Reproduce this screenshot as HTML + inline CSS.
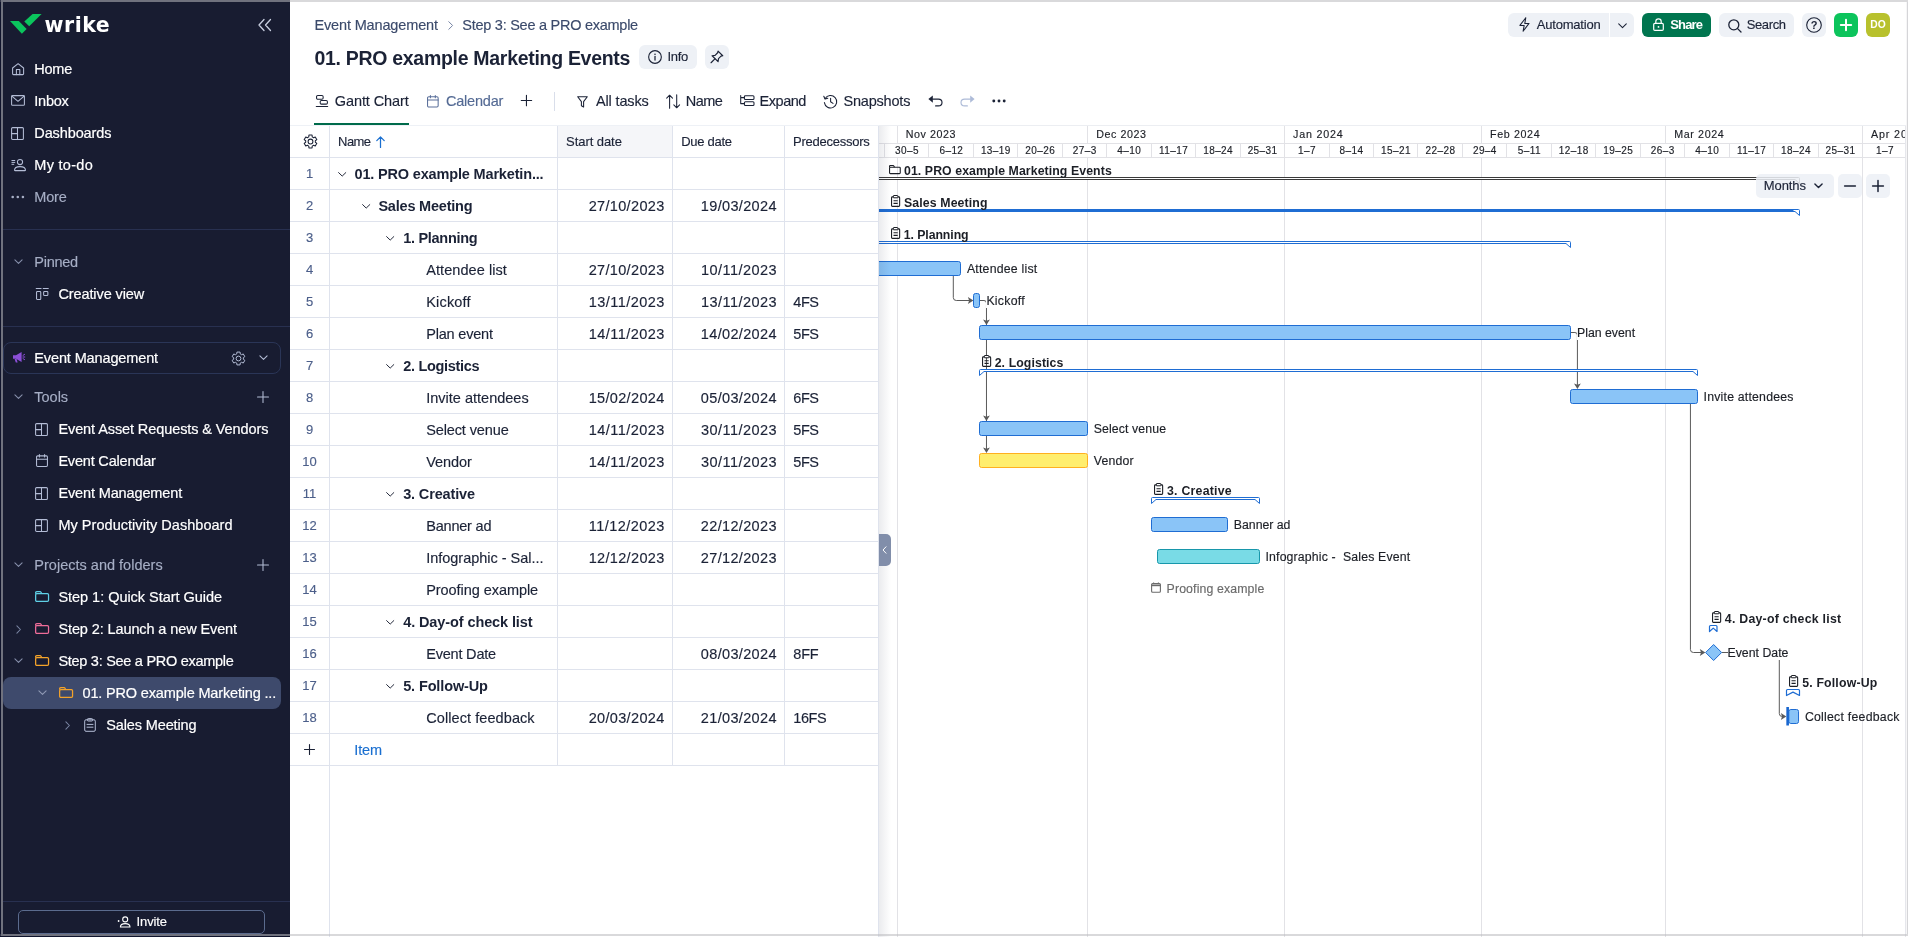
<!DOCTYPE html>
<html lang="en"><head><meta charset="utf-8"><title>Wrike Gantt</title><style>
html,body{margin:0;padding:0}
body{width:1908px;height:937px;overflow:hidden;position:relative;background:#fff;font-family:"Liberation Sans",sans-serif;}
.t{position:absolute;white-space:pre;line-height:20px;height:20px;-webkit-text-stroke:0.15px;}
svg{overflow:visible}
#app{position:absolute;left:0;top:0;width:1908px;height:937px;will-change:transform;}
</style></head>
<body>
<div id="app">
<div style="position:absolute;left:0px;top:0px;width:290px;height:937px;background:#181c31"></div>
<svg style="position:absolute;left:0px;top:0px;" width="50" height="40" viewBox="0 0 50 40" fill="none"><path d="M10 21 L18.8 21 L26.6 29.1 L21.9 33.8 Z" fill="#0bc55d"/><path d="M24.3 21.5 L32.6 14 L41.6 14 L29.2 26.2 Z" fill="#0bc55d"/></svg>
<span class="t" style="left:44.60px;top:14.50px;font-size:20.5px;color:#ffffff;font-weight:700;-webkit-text-stroke:0;letter-spacing:0.507px;font-family:'DejaVu Sans','Liberation Sans',sans-serif;">wrike</span>
<svg style="position:absolute;left:257px;top:18px;" width="16" height="14" viewBox="0 0 16 14" fill="none"><path d="M7 1.5 L2 7 L7 12.5 M13.5 1.5 L8.5 7 L13.5 12.5" stroke="#c9cfe0" stroke-width="1.3" stroke-linecap="round" stroke-linejoin="round"/></svg>
<svg style="position:absolute;left:12px;top:62.9px;" width="13" height="13" viewBox="0 0 13 13" fill="none"><path d="M0.6 5 L6.1 0.7 L11.6 5 V10.7 Q11.6 11.6 10.7 11.6 H1.5 Q0.6 11.6 0.6 10.7 Z" stroke="#b4bdd6" stroke-width="1.05" stroke-linecap="round" stroke-linejoin="round"/><path d="M4.4 11.6 V6.4 H7.8 V11.6" stroke="#b4bdd6" stroke-width="1.05" stroke-linecap="round" stroke-linejoin="round"/></svg>
<span class="t" style="left:34.30px;top:59.00px;font-size:14.5px;color:#ffffff;letter-spacing:-0.247px;-webkit-text-stroke:0.2px #fff;">Home</span>
<svg style="position:absolute;left:11px;top:95px;" width="14" height="11" viewBox="0 0 14 11" fill="none"><rect x="0.6" y="0.6" width="12.8" height="9.7" rx="0.9" stroke="#b4bdd6" stroke-width="1.05" stroke-linecap="round" stroke-linejoin="round"/><path d="M0.9 1.2 L7 6.3 L13.1 1.2" stroke="#b4bdd6" stroke-width="1.05" stroke-linecap="round" stroke-linejoin="round"/></svg>
<span class="t" style="left:34.30px;top:91.00px;font-size:14.5px;color:#ffffff;letter-spacing:-0.237px;-webkit-text-stroke:0.2px #fff;">Inbox</span>
<svg style="position:absolute;left:11px;top:127px;" width="13" height="13" viewBox="0 0 13 13" fill="none"><rect x="0.6" y="0.6" width="11.8" height="11.8" rx="1" stroke="#b4bdd6" stroke-width="1.05" stroke-linecap="round" stroke-linejoin="round"/><path d="M6.5 0.6 V12.4 M0.6 6.6 H6.5" stroke="#b4bdd6" stroke-width="1.05" stroke-linecap="round" stroke-linejoin="round"/></svg>
<span class="t" style="left:34.30px;top:123.00px;font-size:14.5px;color:#ffffff;letter-spacing:-0.109px;-webkit-text-stroke:0.2px #fff;">Dashboards</span>
<svg style="position:absolute;left:11px;top:158px;" width="15" height="13" viewBox="0 0 15 13" fill="none"><circle cx="9" cy="4" r="2.6" stroke="#b4bdd6" stroke-width="1.05" stroke-linecap="round" stroke-linejoin="round"/><path d="M3.5 12.3 Q3.5 8.6 9 8.6 Q14.5 8.6 14.5 12.3 Q14.5 12.6 14 12.6 H4 Q3.5 12.6 3.5 12.3 Z" stroke="#b4bdd6" stroke-width="1.05" stroke-linecap="round" stroke-linejoin="round"/><path d="M0.5 2.5 H4.2 M0.5 4.4 H4.2 M0.5 6.3 H3.2" stroke="#b4bdd6" stroke-width="1"/></svg>
<span class="t" style="left:34.30px;top:155.00px;font-size:14.5px;color:#ffffff;letter-spacing:0.285px;-webkit-text-stroke:0.2px #fff;">My to-do</span>
<svg style="position:absolute;left:11px;top:195px;" width="14" height="4" viewBox="0 0 14 4" fill="none"><circle cx="1.7" cy="2" r="1.3" fill="#a6aec5"/><circle cx="6.8" cy="2" r="1.3" fill="#a6aec5"/><circle cx="11.9" cy="2" r="1.3" fill="#a6aec5"/></svg>
<span class="t" style="left:34.30px;top:187.00px;font-size:14.5px;color:#a6aec5;letter-spacing:-0.187px;">More</span>
<div style="position:absolute;left:3px;top:229px;width:287px;height:1px;background:#283050"></div>
<svg style="position:absolute;left:14px;top:259px;" width="9" height="6" viewBox="0 0 9 6" fill="none"><path d="M0.9 0.9 L4.5 4.4 L8.1 0.9" stroke="#8790ac" stroke-width="1.05" stroke-linecap="round" stroke-linejoin="round"/></svg>
<span class="t" style="left:34.30px;top:252.00px;font-size:14.5px;color:#a6aec5;letter-spacing:-0.259px;">Pinned</span>
<svg style="position:absolute;left:35.8px;top:288px;" width="13" height="12" viewBox="0 0 13 12" fill="none"><path d="M0.2 0.5 H5.1 M7.2 0.5 H12.3" stroke="#b4bdd6" stroke-width="1.05" stroke-linecap="round" stroke-linejoin="round"/><rect x="0.55" y="3.45" width="4.2" height="8" rx="0.8" stroke="#b4bdd6" stroke-width="1.05" stroke-linecap="round" stroke-linejoin="round"/><rect x="7.65" y="3.45" width="4.2" height="4.1" rx="0.8" stroke="#b4bdd6" stroke-width="1.05" stroke-linecap="round" stroke-linejoin="round"/></svg>
<span class="t" style="left:58.40px;top:284.00px;font-size:14.5px;color:#ffffff;letter-spacing:-0.095px;-webkit-text-stroke:0.2px #fff;">Creative view</span>
<div style="position:absolute;left:3px;top:326px;width:287px;height:1px;background:#283050"></div>
<div style="position:absolute;left:3px;top:342px;width:276px;height:30px;border:1px solid #2a3557;border-radius:8px;"></div>
<svg style="position:absolute;left:12px;top:351px;" width="13" height="13" viewBox="0 0 13 13" fill="none"><path d="M1 4.2 H4 L9.6 1 V11 L4 7.8 H1 Z" fill="#8b4fd8"/><path d="M2.6 8 L3.8 11.6 H5.6 L4.6 8 Z" fill="#8b4fd8"/><path d="M11 4.4 L12.6 3.4 M11 6 H12.8 M11 7.6 L12.6 8.6" stroke="#8b4fd8" stroke-width="1" stroke-linecap="round"/></svg>
<span class="t" style="left:34.30px;top:348.00px;font-size:14.5px;color:#ffffff;letter-spacing:-0.128px;-webkit-text-stroke:0.2px #fff;">Event Management</span>
<svg style="position:absolute;left:231.4px;top:350.6px" width="15" height="15" viewBox="0 0 15 15" fill="none"><path d="M5.77 2.91 L5.93 1.09 L9.07 1.09 L9.23 2.91 L10.61 3.71 L12.27 2.94 L13.84 5.65 L12.33 6.70 L12.33 8.30 L13.84 9.35 L12.27 12.06 L10.61 11.29 L9.23 12.09 L9.07 13.91 L5.93 13.91 L5.77 12.09 L4.39 11.29 L2.73 12.06 L1.16 9.35 L2.67 8.30 L2.67 6.70 L1.16 5.65 L2.73 2.94 L4.39 3.71 Z" stroke="#b4bdd6" stroke-width="1.0" stroke-linejoin="round"/><circle cx="7.5" cy="7.5" r="2.4" stroke="#b4bdd6" stroke-width="1.0"/></svg>
<svg style="position:absolute;left:259px;top:355px;" width="9" height="6" viewBox="0 0 9 6" fill="none"><path d="M0.9 0.9 L4.5 4.4 L8.1 0.9" stroke="#b4bdd6" stroke-width="1.05" stroke-linecap="round" stroke-linejoin="round"/></svg>
<svg style="position:absolute;left:14px;top:394px;" width="9" height="6" viewBox="0 0 9 6" fill="none"><path d="M0.9 0.9 L4.5 4.4 L8.1 0.9" stroke="#8790ac" stroke-width="1.05" stroke-linecap="round" stroke-linejoin="round"/></svg>
<span class="t" style="left:34.30px;top:387.00px;font-size:14.5px;color:#a6aec5;letter-spacing:-0.012px;">Tools</span>
<svg style="position:absolute;left:257px;top:391px;" width="12" height="12" viewBox="0 0 12 12" fill="none"><path d="M6 0.5 V11.5 M0.5 6 H11.5" stroke="#b4bdd6" stroke-width="1.05" stroke-linecap="round"/></svg>
<svg style="position:absolute;left:35px;top:423px;" width="13" height="13" viewBox="0 0 13 13" fill="none"><rect x="0.6" y="0.6" width="11.8" height="11.8" rx="1" stroke="#b4bdd6" stroke-width="1.05" stroke-linecap="round" stroke-linejoin="round"/><path d="M6.5 0.6 V12.4 M0.6 6.6 H6.5" stroke="#b4bdd6" stroke-width="1.05" stroke-linecap="round" stroke-linejoin="round"/></svg>
<span class="t" style="left:58.40px;top:419.00px;font-size:14.5px;color:#ffffff;letter-spacing:-0.093px;-webkit-text-stroke:0.2px #fff;">Event Asset Requests &amp; Vendors</span>
<svg style="position:absolute;left:36px;top:453.9px;" width="12" height="13" viewBox="0 0 12 13" fill="none"><rect x="0.55" y="1.85" width="10.9" height="10.6" rx="1.1" stroke="#b4bdd6" stroke-width="1.05" stroke-linecap="round" stroke-linejoin="round"/><path d="M0.55 5.3 H11.45 M3.4 0.5 V2.9 M8.6 0.5 V2.9" stroke="#b4bdd6" stroke-width="1.05" stroke-linecap="round" stroke-linejoin="round"/></svg>
<span class="t" style="left:58.40px;top:451.00px;font-size:14.5px;color:#ffffff;letter-spacing:-0.190px;-webkit-text-stroke:0.2px #fff;">Event Calendar</span>
<svg style="position:absolute;left:35px;top:487px;" width="13" height="13" viewBox="0 0 13 13" fill="none"><rect x="0.6" y="0.6" width="11.8" height="11.8" rx="1" stroke="#b4bdd6" stroke-width="1.05" stroke-linecap="round" stroke-linejoin="round"/><path d="M6.5 0.6 V12.4 M0.6 6.6 H6.5" stroke="#b4bdd6" stroke-width="1.05" stroke-linecap="round" stroke-linejoin="round"/></svg>
<span class="t" style="left:58.40px;top:483.00px;font-size:14.5px;color:#ffffff;letter-spacing:-0.128px;-webkit-text-stroke:0.2px #fff;">Event Management</span>
<svg style="position:absolute;left:35px;top:519px;" width="13" height="13" viewBox="0 0 13 13" fill="none"><rect x="0.6" y="0.6" width="11.8" height="11.8" rx="1" stroke="#b4bdd6" stroke-width="1.05" stroke-linecap="round" stroke-linejoin="round"/><path d="M6.5 0.6 V12.4 M0.6 6.6 H6.5" stroke="#b4bdd6" stroke-width="1.05" stroke-linecap="round" stroke-linejoin="round"/></svg>
<span class="t" style="left:58.40px;top:515.00px;font-size:14.5px;color:#ffffff;letter-spacing:0.037px;-webkit-text-stroke:0.2px #fff;">My Productivity Dashboard</span>
<svg style="position:absolute;left:14px;top:562px;" width="9" height="6" viewBox="0 0 9 6" fill="none"><path d="M0.9 0.9 L4.5 4.4 L8.1 0.9" stroke="#8790ac" stroke-width="1.05" stroke-linecap="round" stroke-linejoin="round"/></svg>
<span class="t" style="left:34.30px;top:555.00px;font-size:14.5px;color:#a6aec5;letter-spacing:0.012px;">Projects and folders</span>
<svg style="position:absolute;left:257px;top:559px;" width="12" height="12" viewBox="0 0 12 12" fill="none"><path d="M6 0.5 V11.5 M0.5 6 H11.5" stroke="#b4bdd6" stroke-width="1.05" stroke-linecap="round"/></svg>
<svg style="position:absolute;left:34.8px;top:591px;" width="15" height="12" viewBox="0 0 15 12" fill="none"><path d="M0.65 2.7 V1.7 Q0.65 0.65 1.7 0.65 H5 Q5.7 0.65 6 1.2 L6.8 2.7" stroke="#5fd0e6" stroke-width="1.25" stroke-linejoin="round"/><rect x="0.65" y="2.7" width="12.9" height="7.7" rx="1.1" stroke="#5fd0e6" stroke-width="1.25"/></svg>
<span class="t" style="left:58.40px;top:587.00px;font-size:14.5px;color:#ffffff;letter-spacing:-0.029px;-webkit-text-stroke:0.2px #fff;">Step 1: Quick Start Guide</span>
<svg style="position:absolute;left:16px;top:624.5px;" width="6" height="9" viewBox="0 0 6 9" fill="none"><path d="M0.9 0.9 L4.4 4.5 L0.9 8.1" stroke="#7a85a3" stroke-width="1.05" stroke-linecap="round" stroke-linejoin="round"/></svg>
<svg style="position:absolute;left:34.8px;top:623px;" width="15" height="12" viewBox="0 0 15 12" fill="none"><path d="M0.65 2.7 V1.7 Q0.65 0.65 1.7 0.65 H5 Q5.7 0.65 6 1.2 L6.8 2.7" stroke="#ee6c99" stroke-width="1.25" stroke-linejoin="round"/><rect x="0.65" y="2.7" width="12.9" height="7.7" rx="1.1" stroke="#ee6c99" stroke-width="1.25"/></svg>
<span class="t" style="left:58.40px;top:619.00px;font-size:14.5px;color:#ffffff;letter-spacing:-0.107px;-webkit-text-stroke:0.2px #fff;">Step 2: Launch a new Event</span>
<svg style="position:absolute;left:14px;top:658px;" width="9" height="6" viewBox="0 0 9 6" fill="none"><path d="M0.9 0.9 L4.5 4.4 L8.1 0.9" stroke="#8790ac" stroke-width="1.05" stroke-linecap="round" stroke-linejoin="round"/></svg>
<svg style="position:absolute;left:34.8px;top:655px;" width="15" height="12" viewBox="0 0 15 12" fill="none"><path d="M0.65 2.7 V1.7 Q0.65 0.65 1.7 0.65 H5 Q5.7 0.65 6 1.2 L6.8 2.7" stroke="#f4a32a" stroke-width="1.25" stroke-linejoin="round"/><rect x="0.65" y="2.7" width="12.9" height="7.7" rx="1.1" stroke="#f4a32a" stroke-width="1.25"/></svg>
<span class="t" style="left:58.40px;top:651.00px;font-size:14.5px;color:#ffffff;letter-spacing:-0.278px;-webkit-text-stroke:0.2px #fff;">Step 3: See a PRO example</span>
<div style="position:absolute;left:3px;top:677px;width:278px;height:32px;background:#3e4a6c;border-radius:8px;"></div>
<svg style="position:absolute;left:38px;top:690px;" width="9" height="6" viewBox="0 0 9 6" fill="none"><path d="M0.9 0.9 L4.5 4.4 L8.1 0.9" stroke="#909ab5" stroke-width="1.05" stroke-linecap="round" stroke-linejoin="round"/></svg>
<svg style="position:absolute;left:58.5px;top:687px;" width="15" height="12" viewBox="0 0 15 12" fill="none"><path d="M0.65 2.7 V1.7 Q0.65 0.65 1.7 0.65 H5 Q5.7 0.65 6 1.2 L6.8 2.7" stroke="#f4a32a" stroke-width="1.25" stroke-linejoin="round"/><rect x="0.65" y="2.7" width="12.9" height="7.7" rx="1.1" stroke="#f4a32a" stroke-width="1.25"/></svg>
<span class="t" style="left:82.50px;top:683.00px;font-size:14.5px;color:#ffffff;letter-spacing:-0.160px;-webkit-text-stroke:0.2px #fff;">01. PRO example Marketing ...</span>
<svg style="position:absolute;left:64.5px;top:720.5px;" width="6" height="9" viewBox="0 0 6 9" fill="none"><path d="M0.9 0.9 L4.4 4.5 L0.9 8.1" stroke="#7a85a3" stroke-width="1.05" stroke-linecap="round" stroke-linejoin="round"/></svg>
<svg style="position:absolute;left:83.5px;top:718px" width="12" height="14" viewBox="0 0 12 14" fill="none"><rect x="0.7" y="1.8" width="10.6" height="11.5" rx="1.3" stroke="#b4bdd6" stroke-width="1.0"/><rect x="3.4" y="0.6" width="5.2" height="2.4" rx="0.8" stroke="#b4bdd6" stroke-width="1.0" fill="none"/><path d="M3 6.4 H9 M3 9.2 H9" stroke="#b4bdd6" stroke-width="1.0" stroke-linecap="round"/></svg>
<span class="t" style="left:106.20px;top:715.00px;font-size:14.5px;color:#ffffff;letter-spacing:-0.122px;-webkit-text-stroke:0.2px #fff;">Sales Meeting</span>
<div style="position:absolute;left:3px;top:901px;width:287px;height:1px;background:#283050"></div>
<div style="position:absolute;left:18px;top:910px;width:245px;height:22px;border:1px solid #5b6b8e;border-radius:5px;"></div>
<svg style="position:absolute;left:116.5px;top:915.5px;" width="14" height="12" viewBox="0 0 14 12" fill="none"><circle cx="8.2" cy="3.4" r="2.5" stroke="#ffffff" stroke-width="1.1"/><path d="M3.4 11 Q3.4 7.6 8.2 7.6 Q13 7.6 13 11 Z" stroke="#ffffff" stroke-width="1.1" stroke-linejoin="round"/><circle cx="1.6" cy="5" r="0.9" fill="#ffffff"/></svg>
<span class="t" style="left:136.60px;top:911.50px;font-size:13px;color:#ffffff;letter-spacing:-0.130px;">Invite</span>
<span class="t" style="left:314.40px;top:15.20px;font-size:14.5px;color:#3b4a6b;letter-spacing:-0.141px;">Event Management</span>
<svg style="position:absolute;left:448px;top:21px;" width="6" height="9" viewBox="0 0 6 9" fill="none"><path d="M0.8 0.7 L4.6 4.5 L0.8 8.3" stroke="#7583a3" stroke-width="1.0" stroke-linecap="round" stroke-linejoin="round"/></svg>
<span class="t" style="left:462.30px;top:15.20px;font-size:14.5px;color:#3b4a6b;letter-spacing:-0.262px;">Step 3: See a PRO example</span>
<span class="t" style="left:314.40px;top:48.00px;font-size:19.5px;color:#1b2236;font-weight:700;-webkit-text-stroke:0;letter-spacing:-0.295px;">01. PRO example Marketing Events</span>
<div style="position:absolute;left:639px;top:45px;width:58px;height:24px;background:#eef1f6;border-radius:6px;"></div>
<svg style="position:absolute;left:647.8px;top:49.9px;" width="14" height="14" viewBox="0 0 14 14" fill="none"><circle cx="7" cy="7" r="6.35" stroke="#1b2236" stroke-width="1.1" stroke-linecap="round" stroke-linejoin="round"/><path d="M7 6.4 V10" stroke="#1b2236" stroke-width="1.25" stroke-linecap="round" stroke-linejoin="round"/><circle cx="7" cy="4.2" r="0.8" fill="#1b2236"/></svg>
<span class="t" style="left:667.40px;top:47.00px;font-size:13px;color:#1b2236;letter-spacing:-0.272px;">Info</span>
<div style="position:absolute;left:705px;top:45px;width:24px;height:24px;background:#eef1f6;border-radius:6px;"></div>
<svg style="position:absolute;left:710.2px;top:49.6px;" width="13.8" height="13.8" viewBox="0 0 13 13" fill="none"><path d="M7.6 1 L12 5.4 L10.4 5.8 L8 8.2 L7.6 11 L2 5.4 L4.8 5 L7.2 2.6 Z" stroke="#1b2236" stroke-width="1.1" stroke-linecap="round" stroke-linejoin="round"/><path d="M4.6 8.4 L1 12" stroke="#1b2236" stroke-width="1.1" stroke-linecap="round" stroke-linejoin="round"/></svg>
<svg style="position:absolute;left:316px;top:95px;" width="12" height="12" viewBox="0 0 12 12" fill="none"><rect x="0.55" y="0.55" width="6.6" height="3.6" rx="1.2" stroke="#1b2236" stroke-width="1.05" stroke-linecap="round" stroke-linejoin="round"/><rect x="4.2" y="5.5" width="7.2" height="3.6" rx="1.2" stroke="#1b2236" stroke-width="1.05" stroke-linecap="round" stroke-linejoin="round"/><path d="M0.3 11.45 H11.7" stroke="#1b2236" stroke-width="1.05" stroke-linecap="round" stroke-linejoin="round"/></svg>
<span class="t" style="left:334.80px;top:91.00px;font-size:14.5px;color:#1b2236;letter-spacing:-0.096px;">Gantt Chart</span>
<svg style="position:absolute;left:427px;top:94.5px;" width="12" height="13" viewBox="0 0 12 13" fill="none"><rect x="0.55" y="1.8" width="10.6" height="10.2" rx="1.2" stroke="#5a6f9a" stroke-width="1.05" stroke-linecap="round" stroke-linejoin="round"/><path d="M0.55 4.9 H11.15 M3.4 0.5 V2.8 M8.3 0.5 V2.8" stroke="#5a6f9a" stroke-width="1.05" stroke-linecap="round" stroke-linejoin="round"/></svg>
<span class="t" style="left:446.00px;top:91.00px;font-size:14.5px;color:#546a94;letter-spacing:-0.218px;">Calendar</span>
<svg style="position:absolute;left:521px;top:95.2px;" width="11" height="11" viewBox="0 0 11 11" fill="none"><path d="M5.45 0.3 V10.7 M0.25 5.5 H10.65" stroke="#1b2236" stroke-width="1.1" stroke-linecap="round" stroke-linejoin="round"/></svg>
<div style="position:absolute;left:554px;top:92px;width:1px;height:19px;background:#d9deea"></div>
<div style="position:absolute;left:314px;top:123px;width:94.7px;height:2px;background:#006b4b"></div>
<svg style="position:absolute;left:577px;top:95.5px;" width="11" height="12" viewBox="0 0 11 12" fill="none"><path d="M0.7 0.7 H10.3 L6.6 5.6 V11 L4.4 9.8 V5.6 Z" stroke="#1b2236" stroke-width="1.05" stroke-linecap="round" stroke-linejoin="round"/></svg>
<span class="t" style="left:596.00px;top:91.00px;font-size:14.5px;color:#1b2236;letter-spacing:-0.156px;">All tasks</span>
<svg style="position:absolute;left:665.5px;top:94.5px;" width="14" height="13" viewBox="0 0 14 13" fill="none"><path d="M3.6 13.2 V0.2 M0.7 3.1 L3.6 0.2 L6.5 3.1 M10.7 -0.2 V12.8 M7.8 9.9 L10.7 12.8 L13.6 9.9" stroke="#1b2236" stroke-width="1.05" stroke-linecap="round" stroke-linejoin="round"/></svg>
<span class="t" style="left:685.80px;top:91.00px;font-size:14.5px;color:#1b2236;letter-spacing:-0.547px;">Name</span>
<svg style="position:absolute;left:740px;top:95px;" width="15" height="12" viewBox="0 0 15 12" fill="none"><path d="M0.7 0.6 V8.6 H4.4 M0.7 2.6 H4.4" stroke="#1b2236" stroke-width="1.05" stroke-linecap="round" stroke-linejoin="round"/><rect x="4.4" y="0.7" width="9.6" height="3.8" rx="1" stroke="#1b2236" stroke-width="1.05" stroke-linecap="round" stroke-linejoin="round"/><rect x="4.4" y="6.7" width="9.6" height="3.8" rx="1" stroke="#1b2236" stroke-width="1.05" stroke-linecap="round" stroke-linejoin="round"/></svg>
<span class="t" style="left:759.50px;top:91.00px;font-size:14.5px;color:#1b2236;letter-spacing:-0.448px;">Expand</span>
<svg style="position:absolute;left:823px;top:93.5px;" width="15" height="15" viewBox="0 0 15 15" fill="none"><path d="M2.2 4.6 A6.2 6.2 0 1 1 1.4 8.6" stroke="#1b2236" stroke-width="1.05" stroke-linecap="round" stroke-linejoin="round"/><path d="M0.8 2.2 L2 5 L4.8 4.2" stroke="#1b2236" stroke-width="1.05" stroke-linecap="round" stroke-linejoin="round"/><path d="M7.6 4.2 V7.8 L10 9.4" stroke="#1b2236" stroke-width="1.05" stroke-linecap="round" stroke-linejoin="round"/></svg>
<span class="t" style="left:843.50px;top:91.00px;font-size:14.5px;color:#1b2236;letter-spacing:-0.203px;">Snapshots</span>
<svg style="position:absolute;left:928px;top:94.5px;" width="15" height="12" viewBox="0 0 15 12" fill="none"><path d="M4.6 4.1 H10.4 Q14 4.1 14 7.5 Q14 10.9 10.4 10.9 H7.6" stroke="#1b2236" stroke-width="1.15" stroke-linecap="round" stroke-linejoin="round"/><path d="M0.4 4.1 L4.8 0.5 V7.7 Z" fill="#1b2236"/></svg>
<svg style="position:absolute;left:959.6px;top:94.5px;" width="15" height="12" viewBox="0 0 15 12" fill="none"><path d="M10.4 4.1 H4.6 Q1 4.1 1 7.5 Q1 10.9 4.6 10.9 H7.4" stroke="#adbbd8" stroke-width="1.15" stroke-linecap="round" stroke-linejoin="round"/><path d="M14.6 4.1 L10.2 0.5 V7.7 Z" fill="#adbbd8"/></svg>
<svg style="position:absolute;left:991.5px;top:98.5px;" width="14" height="4" viewBox="0 0 14 4" fill="none"><circle cx="1.8" cy="2" r="1.45" fill="#1b2236"/><circle cx="7" cy="2" r="1.45" fill="#1b2236"/><circle cx="12.2" cy="2" r="1.45" fill="#1b2236"/></svg>
<div style="position:absolute;left:1508px;top:13px;width:126px;height:24px;background:#eef1f6;border-radius:6px;"></div>
<div style="position:absolute;left:1609px;top:13px;width:1px;height:24px;background:#fff"></div>
<svg style="position:absolute;left:1519px;top:17.4px;" width="11" height="15" viewBox="0 0 11 15" fill="none"><path d="M6.8 0.7 L0.9 8.4 H5.2 L4.1 14.3 L10 6.4 H5.8 Z" stroke="#1b2236" stroke-width="1.05" stroke-linecap="round" stroke-linejoin="round"/></svg>
<span class="t" style="left:1536.70px;top:15.00px;font-size:13px;color:#1b2236;letter-spacing:-0.187px;">Automation</span>
<svg style="position:absolute;left:1617.5px;top:22.5px;" width="9" height="6" viewBox="0 0 9 6" fill="none"><path d="M0.7 0.8 L4.5 4.6 L8.3 0.8" stroke="#1b2236" stroke-width="1.05" stroke-linecap="round" stroke-linejoin="round"/></svg>
<div style="position:absolute;left:1642px;top:13px;width:69px;height:24px;background:#00754f;border-radius:6px;"></div>
<svg style="position:absolute;left:1652.5px;top:18px;" width="11" height="13" viewBox="0 0 11 13" fill="none"><rect x="0.7" y="5.4" width="9.6" height="7" rx="1.2" stroke="#fff" stroke-width="1.2" stroke-linecap="round" stroke-linejoin="round"/><path d="M2.8 5.4 V3.4 Q2.8 0.8 5.5 0.8 Q8.2 0.8 8.2 3.4 V5.4" stroke="#fff" stroke-width="1.2" stroke-linecap="round" stroke-linejoin="round"/><circle cx="5.5" cy="8.9" r="0.9" fill="#fff"/></svg>
<span class="t" style="left:1670.30px;top:15.00px;font-size:13px;color:#fff;font-weight:700;-webkit-text-stroke:0;letter-spacing:-0.888px;">Share</span>
<div style="position:absolute;left:1719px;top:13px;width:75px;height:24px;background:#eef1f6;border-radius:6px;"></div>
<svg style="position:absolute;left:1727.5px;top:18.5px;" width="14" height="14" viewBox="0 0 14 14" fill="none"><circle cx="5.8" cy="5.8" r="5" stroke="#1b2236" stroke-width="1.3" stroke-linecap="round" stroke-linejoin="round"/><path d="M9.6 9.6 L13 13" stroke="#1b2236" stroke-width="1.3" stroke-linecap="round" stroke-linejoin="round"/></svg>
<span class="t" style="left:1746.70px;top:15.00px;font-size:13px;color:#1b2236;letter-spacing:-0.367px;">Search</span>
<div style="position:absolute;left:1802px;top:13px;width:24px;height:24px;background:#eef1f6;border-radius:6px;"></div>
<svg style="position:absolute;left:1806px;top:17px;" width="16" height="16" viewBox="0 0 16 16" fill="none"><circle cx="8" cy="8" r="7.3" stroke="#1b2236" stroke-width="1.1" stroke-linecap="round" stroke-linejoin="round"/></svg>
<span class="t" style="left:1810.63px;top:15.30px;font-size:11px;color:#1b2236;font-weight:700;-webkit-text-stroke:0;">?</span>
<div style="position:absolute;left:1834px;top:13px;width:24px;height:24px;background:#0cc45c;border-radius:6px;"></div>
<svg style="position:absolute;left:1840px;top:19px;" width="12" height="12" viewBox="0 0 12 12" fill="none"><path d="M6 0.8 V11.2 M0.8 6 H11.2" stroke="#fff" stroke-width="2" stroke-linecap="round"/></svg>
<div style="position:absolute;left:1866px;top:13px;width:24px;height:24px;background:#b8c12d;border-radius:6px;"></div>
<span class="t" style="left:1870.27px;top:15.20px;font-size:10.3px;color:#fff;font-weight:700;-webkit-text-stroke:0;">DO</span>
<div style="position:absolute;left:290px;top:125px;width:589px;height:1px;background:#eef1f6"></div>
<div style="position:absolute;left:558px;top:126px;width:114px;height:31px;background:#f5f6f9"></div>
<div style="position:absolute;left:290px;top:157px;width:589px;height:1px;background:#dfe3ed"></div>
<div style="position:absolute;left:290px;top:189px;width:589px;height:1px;background:#dfe3ed"></div>
<div style="position:absolute;left:290px;top:221px;width:589px;height:1px;background:#dfe3ed"></div>
<div style="position:absolute;left:290px;top:253px;width:589px;height:1px;background:#dfe3ed"></div>
<div style="position:absolute;left:290px;top:285px;width:589px;height:1px;background:#dfe3ed"></div>
<div style="position:absolute;left:290px;top:317px;width:589px;height:1px;background:#dfe3ed"></div>
<div style="position:absolute;left:290px;top:349px;width:589px;height:1px;background:#dfe3ed"></div>
<div style="position:absolute;left:290px;top:381px;width:589px;height:1px;background:#dfe3ed"></div>
<div style="position:absolute;left:290px;top:413px;width:589px;height:1px;background:#dfe3ed"></div>
<div style="position:absolute;left:290px;top:445px;width:589px;height:1px;background:#dfe3ed"></div>
<div style="position:absolute;left:290px;top:477px;width:589px;height:1px;background:#dfe3ed"></div>
<div style="position:absolute;left:290px;top:509px;width:589px;height:1px;background:#dfe3ed"></div>
<div style="position:absolute;left:290px;top:541px;width:589px;height:1px;background:#dfe3ed"></div>
<div style="position:absolute;left:290px;top:573px;width:589px;height:1px;background:#dfe3ed"></div>
<div style="position:absolute;left:290px;top:605px;width:589px;height:1px;background:#dfe3ed"></div>
<div style="position:absolute;left:290px;top:637px;width:589px;height:1px;background:#dfe3ed"></div>
<div style="position:absolute;left:290px;top:669px;width:589px;height:1px;background:#dfe3ed"></div>
<div style="position:absolute;left:290px;top:701px;width:589px;height:1px;background:#dfe3ed"></div>
<div style="position:absolute;left:290px;top:733px;width:589px;height:1px;background:#dfe3ed"></div>
<div style="position:absolute;left:290px;top:765px;width:589px;height:1px;background:#dfe3ed"></div>
<div style="position:absolute;left:329px;top:126px;width:1px;height:811px;background:#dfe3ed"></div>
<div style="position:absolute;left:557px;top:126px;width:1px;height:640px;background:#dfe3ed"></div>
<div style="position:absolute;left:672px;top:126px;width:1px;height:640px;background:#dfe3ed"></div>
<div style="position:absolute;left:784px;top:126px;width:1px;height:640px;background:#dfe3ed"></div>
<div style="position:absolute;left:878px;top:126px;width:1px;height:811px;background:#dfe3ed"></div>
<svg style="position:absolute;left:302.9px;top:134.2px" width="15" height="15" viewBox="0 0 15 15" fill="none"><path d="M5.77 2.91 L5.93 1.09 L9.07 1.09 L9.23 2.91 L10.61 3.71 L12.27 2.94 L13.84 5.65 L12.33 6.70 L12.33 8.30 L13.84 9.35 L12.27 12.06 L10.61 11.29 L9.23 12.09 L9.07 13.91 L5.93 13.91 L5.77 12.09 L4.39 11.29 L2.73 12.06 L1.16 9.35 L2.67 8.30 L2.67 6.70 L1.16 5.65 L2.73 2.94 L4.39 3.71 Z" stroke="#1b2236" stroke-width="1.05" stroke-linejoin="round"/><circle cx="7.5" cy="7.5" r="2.4" stroke="#1b2236" stroke-width="1.05"/></svg>
<span class="t" style="left:338.10px;top:131.80px;font-size:13px;color:#1b2236;letter-spacing:-0.572px;">Name</span>
<svg style="position:absolute;left:375.5px;top:135.5px;" width="9" height="12" viewBox="0 0 9 12" fill="none"><path d="M4.5 11.4 V0.9 M0.8 4.6 L4.5 0.9 L8.2 4.6" stroke="#1a6fd0" stroke-width="1.25" stroke-linecap="round" stroke-linejoin="round"/></svg>
<span class="t" style="left:566.10px;top:131.80px;font-size:13px;color:#1b2236;letter-spacing:-0.067px;">Start date</span>
<span class="t" style="left:681.20px;top:131.80px;font-size:13px;color:#1b2236;letter-spacing:-0.271px;">Due date</span>
<span class="t" style="left:793.10px;top:131.80px;font-size:13px;color:#1b2236;letter-spacing:-0.249px;">Predecessors</span>
<span class="t" style="left:305.98px;top:163.70px;font-size:13px;color:#4c5f8a;">1</span>
<svg style="position:absolute;left:337.9px;top:171.7px;" width="8.4" height="5" viewBox="0 0 8.4 5" fill="none"><path d="M0.6 0.6 L4.2 4.1 L7.8 0.6" stroke="#23283a" stroke-width="1.0" stroke-linecap="round" stroke-linejoin="round"/></svg>
<span class="t" style="left:354.50px;top:164.00px;font-size:14.5px;color:#1b2236;font-weight:700;-webkit-text-stroke:0;letter-spacing:-0.164px;">01. PRO example Marketin...</span>
<span class="t" style="left:305.98px;top:195.70px;font-size:13px;color:#4c5f8a;">2</span>
<svg style="position:absolute;left:361.9px;top:203.7px;" width="8.4" height="5" viewBox="0 0 8.4 5" fill="none"><path d="M0.6 0.6 L4.2 4.1 L7.8 0.6" stroke="#23283a" stroke-width="1.0" stroke-linecap="round" stroke-linejoin="round"/></svg>
<span class="t" style="left:378.40px;top:196.00px;font-size:14.5px;color:#1b2236;font-weight:700;-webkit-text-stroke:0;letter-spacing:-0.208px;">Sales Meeting</span>
<span class="t" style="left:588.64px;top:196.00px;font-size:14.5px;color:#1b2236;letter-spacing:0.342px;">27/10/2023</span>
<span class="t" style="left:700.84px;top:196.00px;font-size:14.5px;color:#1b2236;letter-spacing:0.342px;">19/03/2024</span>
<span class="t" style="left:305.98px;top:227.70px;font-size:13px;color:#4c5f8a;">3</span>
<svg style="position:absolute;left:385.9px;top:235.7px;" width="8.4" height="5" viewBox="0 0 8.4 5" fill="none"><path d="M0.6 0.6 L4.2 4.1 L7.8 0.6" stroke="#23283a" stroke-width="1.0" stroke-linecap="round" stroke-linejoin="round"/></svg>
<span class="t" style="left:403.20px;top:228.00px;font-size:14.5px;color:#1b2236;font-weight:700;-webkit-text-stroke:0;letter-spacing:-0.286px;">1. Planning</span>
<span class="t" style="left:305.98px;top:259.70px;font-size:13px;color:#4c5f8a;">4</span>
<span class="t" style="left:426.20px;top:260.00px;font-size:14.5px;color:#1b2236;letter-spacing:0.076px;">Attendee list</span>
<span class="t" style="left:588.64px;top:260.00px;font-size:14.5px;color:#1b2236;letter-spacing:0.342px;">27/10/2023</span>
<span class="t" style="left:700.95px;top:260.00px;font-size:14.5px;color:#1b2236;letter-spacing:0.450px;">10/11/2023</span>
<span class="t" style="left:305.98px;top:291.70px;font-size:13px;color:#4c5f8a;">5</span>
<span class="t" style="left:426.20px;top:292.00px;font-size:14.5px;color:#1b2236;letter-spacing:0.191px;">Kickoff</span>
<span class="t" style="left:588.75px;top:292.00px;font-size:14.5px;color:#1b2236;letter-spacing:0.450px;">13/11/2023</span>
<span class="t" style="left:700.95px;top:292.00px;font-size:14.5px;color:#1b2236;letter-spacing:0.450px;">13/11/2023</span>
<span class="t" style="left:793.30px;top:292.00px;font-size:14.5px;color:#1b2236;letter-spacing:-0.465px;">4FS</span>
<span class="t" style="left:305.98px;top:323.70px;font-size:13px;color:#4c5f8a;">6</span>
<span class="t" style="left:426.20px;top:324.00px;font-size:14.5px;color:#1b2236;letter-spacing:-0.193px;">Plan event</span>
<span class="t" style="left:588.75px;top:324.00px;font-size:14.5px;color:#1b2236;letter-spacing:0.450px;">14/11/2023</span>
<span class="t" style="left:700.84px;top:324.00px;font-size:14.5px;color:#1b2236;letter-spacing:0.342px;">14/02/2024</span>
<span class="t" style="left:793.30px;top:324.00px;font-size:14.5px;color:#1b2236;letter-spacing:-0.465px;">5FS</span>
<span class="t" style="left:305.98px;top:355.70px;font-size:13px;color:#4c5f8a;">7</span>
<svg style="position:absolute;left:385.9px;top:363.7px;" width="8.4" height="5" viewBox="0 0 8.4 5" fill="none"><path d="M0.6 0.6 L4.2 4.1 L7.8 0.6" stroke="#23283a" stroke-width="1.0" stroke-linecap="round" stroke-linejoin="round"/></svg>
<span class="t" style="left:403.20px;top:356.00px;font-size:14.5px;color:#1b2236;font-weight:700;-webkit-text-stroke:0;letter-spacing:-0.307px;">2. Logistics</span>
<span class="t" style="left:305.98px;top:387.70px;font-size:13px;color:#4c5f8a;">8</span>
<span class="t" style="left:426.20px;top:388.00px;font-size:14.5px;color:#1b2236;letter-spacing:0.007px;">Invite attendees</span>
<span class="t" style="left:588.64px;top:388.00px;font-size:14.5px;color:#1b2236;letter-spacing:0.342px;">15/02/2024</span>
<span class="t" style="left:700.84px;top:388.00px;font-size:14.5px;color:#1b2236;letter-spacing:0.342px;">05/03/2024</span>
<span class="t" style="left:793.30px;top:388.00px;font-size:14.5px;color:#1b2236;letter-spacing:-0.465px;">6FS</span>
<span class="t" style="left:305.98px;top:419.70px;font-size:13px;color:#4c5f8a;">9</span>
<span class="t" style="left:426.20px;top:420.00px;font-size:14.5px;color:#1b2236;letter-spacing:-0.120px;">Select venue</span>
<span class="t" style="left:588.75px;top:420.00px;font-size:14.5px;color:#1b2236;letter-spacing:0.450px;">14/11/2023</span>
<span class="t" style="left:700.95px;top:420.00px;font-size:14.5px;color:#1b2236;letter-spacing:0.450px;">30/11/2023</span>
<span class="t" style="left:793.30px;top:420.00px;font-size:14.5px;color:#1b2236;letter-spacing:-0.465px;">5FS</span>
<span class="t" style="left:302.37px;top:451.70px;font-size:13px;color:#4c5f8a;">10</span>
<span class="t" style="left:426.20px;top:452.00px;font-size:14.5px;color:#1b2236;letter-spacing:-0.061px;">Vendor</span>
<span class="t" style="left:588.75px;top:452.00px;font-size:14.5px;color:#1b2236;letter-spacing:0.450px;">14/11/2023</span>
<span class="t" style="left:700.95px;top:452.00px;font-size:14.5px;color:#1b2236;letter-spacing:0.450px;">30/11/2023</span>
<span class="t" style="left:793.30px;top:452.00px;font-size:14.5px;color:#1b2236;letter-spacing:-0.465px;">5FS</span>
<span class="t" style="left:302.85px;top:483.70px;font-size:13px;color:#4c5f8a;">11</span>
<svg style="position:absolute;left:385.9px;top:491.7px;" width="8.4" height="5" viewBox="0 0 8.4 5" fill="none"><path d="M0.6 0.6 L4.2 4.1 L7.8 0.6" stroke="#23283a" stroke-width="1.0" stroke-linecap="round" stroke-linejoin="round"/></svg>
<span class="t" style="left:403.20px;top:484.00px;font-size:14.5px;color:#1b2236;font-weight:700;-webkit-text-stroke:0;letter-spacing:-0.151px;">3. Creative</span>
<span class="t" style="left:302.37px;top:515.70px;font-size:13px;color:#4c5f8a;">12</span>
<span class="t" style="left:426.20px;top:516.00px;font-size:14.5px;color:#1b2236;letter-spacing:-0.202px;">Banner ad</span>
<span class="t" style="left:588.75px;top:516.00px;font-size:14.5px;color:#1b2236;letter-spacing:0.450px;">11/12/2023</span>
<span class="t" style="left:700.84px;top:516.00px;font-size:14.5px;color:#1b2236;letter-spacing:0.342px;">22/12/2023</span>
<span class="t" style="left:302.37px;top:547.70px;font-size:13px;color:#4c5f8a;">13</span>
<span class="t" style="left:426.20px;top:548.00px;font-size:14.5px;color:#1b2236;letter-spacing:-0.019px;">Infographic - Sal...</span>
<span class="t" style="left:588.64px;top:548.00px;font-size:14.5px;color:#1b2236;letter-spacing:0.342px;">12/12/2023</span>
<span class="t" style="left:700.84px;top:548.00px;font-size:14.5px;color:#1b2236;letter-spacing:0.342px;">27/12/2023</span>
<span class="t" style="left:302.37px;top:579.70px;font-size:13px;color:#4c5f8a;">14</span>
<span class="t" style="left:426.20px;top:580.00px;font-size:14.5px;color:#1b2236;letter-spacing:-0.059px;">Proofing example</span>
<span class="t" style="left:302.37px;top:611.70px;font-size:13px;color:#4c5f8a;">15</span>
<svg style="position:absolute;left:385.9px;top:619.7px;" width="8.4" height="5" viewBox="0 0 8.4 5" fill="none"><path d="M0.6 0.6 L4.2 4.1 L7.8 0.6" stroke="#23283a" stroke-width="1.0" stroke-linecap="round" stroke-linejoin="round"/></svg>
<span class="t" style="left:403.20px;top:612.00px;font-size:14.5px;color:#1b2236;font-weight:700;-webkit-text-stroke:0;letter-spacing:-0.103px;">4. Day-of check list</span>
<span class="t" style="left:302.37px;top:643.70px;font-size:13px;color:#4c5f8a;">16</span>
<span class="t" style="left:426.20px;top:644.00px;font-size:14.5px;color:#1b2236;letter-spacing:-0.195px;">Event Date</span>
<span class="t" style="left:700.84px;top:644.00px;font-size:14.5px;color:#1b2236;letter-spacing:0.342px;">08/03/2024</span>
<span class="t" style="left:793.30px;top:644.00px;font-size:14.5px;color:#1b2236;letter-spacing:-0.194px;">8FF</span>
<span class="t" style="left:302.37px;top:675.70px;font-size:13px;color:#4c5f8a;">17</span>
<svg style="position:absolute;left:385.9px;top:683.7px;" width="8.4" height="5" viewBox="0 0 8.4 5" fill="none"><path d="M0.6 0.6 L4.2 4.1 L7.8 0.6" stroke="#23283a" stroke-width="1.0" stroke-linecap="round" stroke-linejoin="round"/></svg>
<span class="t" style="left:403.20px;top:676.00px;font-size:14.5px;color:#1b2236;font-weight:700;-webkit-text-stroke:0;letter-spacing:-0.132px;">5. Follow-Up</span>
<span class="t" style="left:302.37px;top:707.70px;font-size:13px;color:#4c5f8a;">18</span>
<span class="t" style="left:426.20px;top:708.00px;font-size:14.5px;color:#1b2236;letter-spacing:0.081px;">Collect feedback</span>
<span class="t" style="left:588.64px;top:708.00px;font-size:14.5px;color:#1b2236;letter-spacing:0.342px;">20/03/2024</span>
<span class="t" style="left:700.84px;top:708.00px;font-size:14.5px;color:#1b2236;letter-spacing:0.342px;">21/03/2024</span>
<span class="t" style="left:793.30px;top:708.00px;font-size:14.5px;color:#1b2236;letter-spacing:-0.418px;">16FS</span>
<svg style="position:absolute;left:304px;top:744px;" width="11" height="11" viewBox="0 0 11 11" fill="none"><path d="M5.5 0.5 V10.5 M0.5 5.5 H10.5" stroke="#1b2236" stroke-width="1.1" stroke-linecap="round"/></svg>
<span class="t" style="left:354.20px;top:740.00px;font-size:14.5px;color:#1a6fd0;letter-spacing:-0.076px;">Item</span>
<div style="position:absolute;left:879px;top:125px;width:1027px;height:812px;overflow:hidden;">
<div style="position:absolute;left:0px;top:1px;width:1027px;height:811px;background:#fff"></div>
<div style="position:absolute;left:18px;top:1px;width:1px;height:17px;background:#e2e2e6"></div>
<div style="position:absolute;left:18px;top:33px;width:1px;height:779px;background:#e2e2e6"></div>
<div style="position:absolute;left:208px;top:1px;width:1px;height:17px;background:#e2e2e6"></div>
<div style="position:absolute;left:208px;top:33px;width:1px;height:779px;background:#e2e2e6"></div>
<div style="position:absolute;left:405px;top:1px;width:1px;height:17px;background:#e2e2e6"></div>
<div style="position:absolute;left:405px;top:33px;width:1px;height:779px;background:#e2e2e6"></div>
<div style="position:absolute;left:602px;top:1px;width:1px;height:17px;background:#e2e2e6"></div>
<div style="position:absolute;left:602px;top:33px;width:1px;height:779px;background:#e2e2e6"></div>
<div style="position:absolute;left:786px;top:1px;width:1px;height:17px;background:#e2e2e6"></div>
<div style="position:absolute;left:786px;top:33px;width:1px;height:779px;background:#e2e2e6"></div>
<div style="position:absolute;left:983px;top:1px;width:1px;height:17px;background:#e2e2e6"></div>
<div style="position:absolute;left:983px;top:33px;width:1px;height:779px;background:#e2e2e6"></div>
<div style="position:absolute;left:0px;top:0px;width:1027px;height:1px;background:#eceef2"></div>
<div style="position:absolute;left:0px;top:18px;width:1027px;height:1px;background:#e2e2e6"></div>
<div style="position:absolute;left:0px;top:32px;width:1027px;height:1px;background:#e2e2e6"></div>
<div style="position:absolute;left:5px;top:19px;width:1px;height:13px;background:#e2e2e6"></div>
<div style="position:absolute;left:49px;top:19px;width:1px;height:13px;background:#e2e2e6"></div>
<div style="position:absolute;left:94px;top:19px;width:1px;height:13px;background:#e2e2e6"></div>
<div style="position:absolute;left:138px;top:19px;width:1px;height:13px;background:#e2e2e6"></div>
<div style="position:absolute;left:183px;top:19px;width:1px;height:13px;background:#e2e2e6"></div>
<div style="position:absolute;left:227px;top:19px;width:1px;height:13px;background:#e2e2e6"></div>
<div style="position:absolute;left:272px;top:19px;width:1px;height:13px;background:#e2e2e6"></div>
<div style="position:absolute;left:316px;top:19px;width:1px;height:13px;background:#e2e2e6"></div>
<div style="position:absolute;left:361px;top:19px;width:1px;height:13px;background:#e2e2e6"></div>
<div style="position:absolute;left:405px;top:19px;width:1px;height:13px;background:#e2e2e6"></div>
<div style="position:absolute;left:450px;top:19px;width:1px;height:13px;background:#e2e2e6"></div>
<div style="position:absolute;left:494px;top:19px;width:1px;height:13px;background:#e2e2e6"></div>
<div style="position:absolute;left:538px;top:19px;width:1px;height:13px;background:#e2e2e6"></div>
<div style="position:absolute;left:583px;top:19px;width:1px;height:13px;background:#e2e2e6"></div>
<div style="position:absolute;left:627px;top:19px;width:1px;height:13px;background:#e2e2e6"></div>
<div style="position:absolute;left:672px;top:19px;width:1px;height:13px;background:#e2e2e6"></div>
<div style="position:absolute;left:716px;top:19px;width:1px;height:13px;background:#e2e2e6"></div>
<div style="position:absolute;left:761px;top:19px;width:1px;height:13px;background:#e2e2e6"></div>
<div style="position:absolute;left:805px;top:19px;width:1px;height:13px;background:#e2e2e6"></div>
<div style="position:absolute;left:850px;top:19px;width:1px;height:13px;background:#e2e2e6"></div>
<div style="position:absolute;left:894px;top:19px;width:1px;height:13px;background:#e2e2e6"></div>
<div style="position:absolute;left:939px;top:19px;width:1px;height:13px;background:#e2e2e6"></div>
<div style="position:absolute;left:983px;top:19px;width:1px;height:13px;background:#e2e2e6"></div>
</div>
<div style="position:absolute;left:0;top:0;width:1905px;height:937px;overflow:hidden;pointer-events:none">
<span class="t" style="left:905.70px;top:124.30px;font-size:10.7px;color:#1c1f26;letter-spacing:0.567px;">Nov 2023</span>
<span class="t" style="left:1096.23px;top:124.30px;font-size:10.7px;color:#1c1f26;letter-spacing:0.567px;">Dec 2023</span>
<span class="t" style="left:1293.11px;top:124.30px;font-size:10.7px;color:#1c1f26;letter-spacing:0.789px;">Jan 2024</span>
<span class="t" style="left:1489.99px;top:124.30px;font-size:10.7px;color:#1c1f26;letter-spacing:0.641px;">Feb 2024</span>
<span class="t" style="left:1674.17px;top:124.30px;font-size:10.7px;color:#1c1f26;letter-spacing:0.643px;">Mar 2024</span>
<span class="t" style="left:1871.05px;top:124.30px;font-size:10.7px;color:#1c1f26;letter-spacing:0.864px;">Apr 2024</span>
<span class="t" style="left:894.97px;top:141.20px;font-size:10px;color:#1c1f26;letter-spacing:0.420px;">30–5</span>
<span class="t" style="left:939.43px;top:141.20px;font-size:10px;color:#1c1f26;letter-spacing:0.420px;">6–12</span>
<span class="t" style="left:980.90px;top:141.20px;font-size:10px;color:#1c1f26;letter-spacing:0.420px;">13–19</span>
<span class="t" style="left:1025.35px;top:141.20px;font-size:10px;color:#1c1f26;letter-spacing:0.420px;">20–26</span>
<span class="t" style="left:1072.80px;top:141.20px;font-size:10px;color:#1c1f26;letter-spacing:0.420px;">27–3</span>
<span class="t" style="left:1117.26px;top:141.20px;font-size:10px;color:#1c1f26;letter-spacing:0.420px;">4–10</span>
<span class="t" style="left:1159.09px;top:141.20px;font-size:10px;color:#1c1f26;letter-spacing:0.420px;">11–17</span>
<span class="t" style="left:1203.18px;top:141.20px;font-size:10px;color:#1c1f26;letter-spacing:0.420px;">18–24</span>
<span class="t" style="left:1247.64px;top:141.20px;font-size:10px;color:#1c1f26;letter-spacing:0.420px;">25–31</span>
<span class="t" style="left:1298.08px;top:141.20px;font-size:10px;color:#1c1f26;letter-spacing:0.420px;">1–7</span>
<span class="t" style="left:1339.54px;top:141.20px;font-size:10px;color:#1c1f26;letter-spacing:0.420px;">8–14</span>
<span class="t" style="left:1381.01px;top:141.20px;font-size:10px;color:#1c1f26;letter-spacing:0.420px;">15–21</span>
<span class="t" style="left:1425.47px;top:141.20px;font-size:10px;color:#1c1f26;letter-spacing:0.420px;">22–28</span>
<span class="t" style="left:1472.91px;top:141.20px;font-size:10px;color:#1c1f26;letter-spacing:0.420px;">29–4</span>
<span class="t" style="left:1517.74px;top:141.20px;font-size:10px;color:#1c1f26;letter-spacing:0.420px;">5–11</span>
<span class="t" style="left:1558.84px;top:141.20px;font-size:10px;color:#1c1f26;letter-spacing:0.420px;">12–18</span>
<span class="t" style="left:1603.29px;top:141.20px;font-size:10px;color:#1c1f26;letter-spacing:0.420px;">19–25</span>
<span class="t" style="left:1650.74px;top:141.20px;font-size:10px;color:#1c1f26;letter-spacing:0.420px;">26–3</span>
<span class="t" style="left:1695.20px;top:141.20px;font-size:10px;color:#1c1f26;letter-spacing:0.420px;">4–10</span>
<span class="t" style="left:1737.03px;top:141.20px;font-size:10px;color:#1c1f26;letter-spacing:0.420px;">11–17</span>
<span class="t" style="left:1781.12px;top:141.20px;font-size:10px;color:#1c1f26;letter-spacing:0.420px;">18–24</span>
<span class="t" style="left:1825.58px;top:141.20px;font-size:10px;color:#1c1f26;letter-spacing:0.420px;">25–31</span>
<span class="t" style="left:1876.02px;top:141.20px;font-size:10px;color:#1c1f26;letter-spacing:0.420px;">1–7</span>
<svg style="position:absolute;left:0;top:0" width="1908" height="937" viewBox="0 0 1908 937"><defs><clipPath id="gc"><rect x="879" y="158" width="1027" height="779"/></clipPath></defs><g clip-path="url(#gc)"><path d="M953.31 276 V297.5 Q953.31 300.5 956.31 300.5 H970.41" stroke="#5a5a5a" stroke-width="1" fill="none"/><path d="M973.41 300.5 L967.91 297.1 L969.11 300.5 L967.91 303.9 Z" fill="#5a5a5a"/><path d="M979.76 300.5 H983.97 Q986.47 300.5 986.47 303.0 V450" stroke="#5a5a5a" stroke-width="1" fill="none"/><path d="M986.47 325 L983.07 319.5 L986.47 320.7 L989.87 319.5 Z" fill="#5a5a5a"/><path d="M986.47 421 L983.07 415.5 L986.47 416.7 L989.87 415.5 Z" fill="#5a5a5a"/><path d="M986.47 453 L983.07 447.5 L986.47 448.7 L989.87 447.5 Z" fill="#5a5a5a"/><path d="M1570.41 332.5 H1574.91 Q1577.41 332.5 1577.41 335.0 V386" stroke="#5a5a5a" stroke-width="1" fill="none"/><path d="M1577.41 389 L1574.01 383.5 L1577.41 384.7 L1580.81 383.5 Z" fill="#5a5a5a"/><path d="M1690.43 404 V649.5 Q1690.43 652.5 1693.43 652.5 H1702.61" stroke="#5a5a5a" stroke-width="1" fill="none"/><path d="M1705.31 652.5 L1699.81 649.1 L1701.01 652.5 L1699.81 655.9 Z" fill="#5a5a5a"/><path d="M1721.61 652.5 H1776.80 Q1779.30 652.5 1779.30 655.0 V713.5 Q1779.30 716.5 1782.30 716.5 H1783.34" stroke="#5a5a5a" stroke-width="1" fill="none"/><path d="M1786.34 716.5 L1780.84 713.1 L1782.04 716.5 L1780.84 719.9 Z" fill="#5a5a5a"/><path d="M869.50 183.5 V178.5 Q869.50 177.5 870.50 177.5 H1798.50 Q1799.50 177.5 1799.50 178.5 V183.5 L1795.00 179.5 H874.00 Z" fill="#fff" stroke="#3a3a3a" stroke-width="1" stroke-linejoin="round"/><path d="M869.50 215.5 V210.5 Q869.50 209.5 870.50 209.5 H1798.50 Q1799.50 209.5 1799.50 210.5 V215.5 L1795.00 211.5 H874.00 Z" fill="#fff" stroke="#1f6dd3" stroke-width="1" stroke-linejoin="round"/><rect x="869.50" y="209" width="924.00" height="3" fill="#1f6dd3"/><path d="M869.50 247.5 V242.5 Q869.50 241.5 870.50 241.5 H1569.50 Q1570.50 241.5 1570.50 242.5 V247.5 L1566.00 243.5 H874.00 Z" fill="#fff" stroke="#1f6dd3" stroke-width="1" stroke-linejoin="round"/><path d="M979.50 375.5 V370.5 Q979.50 369.5 980.50 369.5 H1696.50 Q1697.50 369.5 1697.50 370.5 V375.5 L1693.00 371.5 H984.00 Z" fill="#fff" stroke="#1f6dd3" stroke-width="1" stroke-linejoin="round"/><path d="M1151.50 503.5 V498.5 Q1151.50 497.5 1152.50 497.5 H1258.50 Q1259.50 497.5 1259.50 498.5 V503.5 L1255.00 499.5 H1156.00 Z" fill="#fff" stroke="#1f6dd3" stroke-width="1" stroke-linejoin="round"/><path d="M1709.50 631.5 V626.5 Q1709.50 625.5 1710.50 625.5 H1716.00 Q1717.00 625.5 1717.00 626.5 V631.5 L1713.25 628.1 Z" fill="#fff" stroke="#1f6dd3" stroke-width="1.2" stroke-linejoin="round"/><path d="M1786.50 695.5 V690.5 Q1786.50 689.5 1787.50 689.5 H1798.50 Q1799.50 689.5 1799.50 690.5 V695.5 L1793.00 692.1 Z" fill="#fff" stroke="#1f6dd3" stroke-width="1.2" stroke-linejoin="round"/><rect x="874.50" y="261.5" width="86.00" height="14" rx="2" fill="#8ac4f7" stroke="#1f6dd3" stroke-width="1"/><rect x="973.50" y="293.5" width="6.00" height="14" rx="2" fill="#8ac4f7" stroke="#1f6dd3" stroke-width="1"/><rect x="979.50" y="325.5" width="591.00" height="14" rx="2" fill="#8ac4f7" stroke="#1f6dd3" stroke-width="1"/><rect x="1570.50" y="389.5" width="127.00" height="14" rx="2" fill="#8ac4f7" stroke="#1f6dd3" stroke-width="1"/><rect x="979.50" y="421.5" width="108.00" height="14" rx="2" fill="#8ac4f7" stroke="#1f6dd3" stroke-width="1"/><rect x="979.50" y="453.5" width="108.00" height="14" rx="2" fill="#ffee6e" stroke="#ffb01f" stroke-width="1"/><rect x="1151.50" y="517.5" width="76.00" height="14" rx="2" fill="#8ac4f7" stroke="#1f6dd3" stroke-width="1"/><rect x="1157.50" y="549.5" width="102.00" height="14" rx="2" fill="#79dbe6" stroke="#1797ab" stroke-width="1"/><path d="M1705.61 652.5 L1713.61 644.5 L1721.61 652.5 L1713.61 660.5 Z" fill="#8ac4f7" stroke="#1f6dd3" stroke-width="1" stroke-linejoin="round"/><rect x="1788.84" y="709.5" width="9.70" height="14" rx="2" fill="#8ac4f7" stroke="#1f6dd3" stroke-width="1"/><rect x="1786.34" y="707" width="2.6" height="18.5" fill="#1866cf"/></g></svg>
<svg style="position:absolute;left:888.9px;top:165.3px;" width="12" height="10" viewBox="0 0 12 10" fill="none"><path d="M0.55 2.2 V1.3 Q0.55 0.55 1.3 0.55 H4.2 Q4.6 0.55 4.8 0.9 L5.5 2.2" stroke="#1c1f26" stroke-width="1.1" stroke-linejoin="round"/><rect x="0.55" y="2.2" width="10.7" height="6.4" rx="0.8" stroke="#1c1f26" stroke-width="1.1"/></svg>
<span class="t" style="left:904.00px;top:160.50px;font-size:12.3px;color:#1c1f26;font-weight:700;-webkit-text-stroke:0;letter-spacing:0.087px;">01. PRO example Marketing Events</span>
<svg style="position:absolute;left:890.8px;top:195.0px;" width="9.2" height="12" viewBox="0 0 9.2 12" fill="none"><rect x="0.55" y="1.9" width="8.1" height="9.5" rx="0.8" stroke="#1c1f26" stroke-width="1.1"/><rect x="2.3" y="0.5" width="4.6" height="2.3" rx="0.5" stroke="#1c1f26" stroke-width="1" fill="#fff"/><path d="M2.5 5.8 H6.7 M2.5 8.4 H6.7" stroke="#1c1f26" stroke-width="1.1"/></svg>
<span class="t" style="left:904.00px;top:192.50px;font-size:12.3px;color:#1c1f26;font-weight:700;-webkit-text-stroke:0;letter-spacing:0.122px;">Sales Meeting</span>
<svg style="position:absolute;left:890.5999999999999px;top:227.0px;" width="9.2" height="12" viewBox="0 0 9.2 12" fill="none"><rect x="0.55" y="1.9" width="8.1" height="9.5" rx="0.8" stroke="#1c1f26" stroke-width="1.1"/><rect x="2.3" y="0.5" width="4.6" height="2.3" rx="0.5" stroke="#1c1f26" stroke-width="1" fill="#fff"/><path d="M2.5 5.8 H6.7 M2.5 8.4 H6.7" stroke="#1c1f26" stroke-width="1.1"/></svg>
<span class="t" style="left:903.80px;top:224.50px;font-size:12.3px;color:#1c1f26;font-weight:700;-webkit-text-stroke:0;letter-spacing:-0.081px;">1. Planning</span>
<svg style="position:absolute;left:981.5px;top:355.0px;" width="9.2" height="12" viewBox="0 0 9.2 12" fill="none"><rect x="0.55" y="1.9" width="8.1" height="9.5" rx="0.8" stroke="#1c1f26" stroke-width="1.1"/><rect x="2.3" y="0.5" width="4.6" height="2.3" rx="0.5" stroke="#1c1f26" stroke-width="1" fill="#fff"/><path d="M2.5 5.8 H6.7 M2.5 8.4 H6.7" stroke="#1c1f26" stroke-width="1.1"/></svg>
<span class="t" style="left:994.70px;top:352.50px;font-size:12.3px;color:#1c1f26;font-weight:700;-webkit-text-stroke:0;letter-spacing:0.095px;">2. Logistics</span>
<svg style="position:absolute;left:1153.8px;top:483.0px;" width="9.2" height="12" viewBox="0 0 9.2 12" fill="none"><rect x="0.55" y="1.9" width="8.1" height="9.5" rx="0.8" stroke="#1c1f26" stroke-width="1.1"/><rect x="2.3" y="0.5" width="4.6" height="2.3" rx="0.5" stroke="#1c1f26" stroke-width="1" fill="#fff"/><path d="M2.5 5.8 H6.7 M2.5 8.4 H6.7" stroke="#1c1f26" stroke-width="1.1"/></svg>
<span class="t" style="left:1167.00px;top:480.50px;font-size:12.3px;color:#1c1f26;font-weight:700;-webkit-text-stroke:0;letter-spacing:0.244px;">3. Creative</span>
<svg style="position:absolute;left:1711.6px;top:611.0px;" width="9.2" height="12" viewBox="0 0 9.2 12" fill="none"><rect x="0.55" y="1.9" width="8.1" height="9.5" rx="0.8" stroke="#1c1f26" stroke-width="1.1"/><rect x="2.3" y="0.5" width="4.6" height="2.3" rx="0.5" stroke="#1c1f26" stroke-width="1" fill="#fff"/><path d="M2.5 5.8 H6.7 M2.5 8.4 H6.7" stroke="#1c1f26" stroke-width="1.1"/></svg>
<span class="t" style="left:1724.80px;top:608.50px;font-size:12.3px;color:#1c1f26;font-weight:700;-webkit-text-stroke:0;letter-spacing:0.260px;">4. Day-of check list</span>
<svg style="position:absolute;left:1789.0px;top:675.0px;" width="9.2" height="12" viewBox="0 0 9.2 12" fill="none"><rect x="0.55" y="1.9" width="8.1" height="9.5" rx="0.8" stroke="#1c1f26" stroke-width="1.1"/><rect x="2.3" y="0.5" width="4.6" height="2.3" rx="0.5" stroke="#1c1f26" stroke-width="1" fill="#fff"/><path d="M2.5 5.8 H6.7 M2.5 8.4 H6.7" stroke="#1c1f26" stroke-width="1.1"/></svg>
<span class="t" style="left:1802.20px;top:672.50px;font-size:12.3px;color:#1c1f26;font-weight:700;-webkit-text-stroke:0;letter-spacing:0.176px;">5. Follow-Up</span>
<span class="t" style="left:966.90px;top:258.50px;font-size:12.3px;color:#1c1f26;letter-spacing:0.224px;">Attendee list</span>
<span class="t" style="left:986.40px;top:290.50px;font-size:12.3px;color:#1c1f26;letter-spacing:0.273px;background:#fff;line-height:14px;height:14px;margin-top:3px;">Kickoff</span>
<span class="t" style="left:1577.00px;top:322.50px;font-size:12.3px;color:#1c1f26;background:#fff;line-height:14px;height:14px;margin-top:3px;">Plan event</span>
<span class="t" style="left:1703.60px;top:386.50px;font-size:12.3px;color:#1c1f26;letter-spacing:0.198px;">Invite attendees</span>
<span class="t" style="left:1093.70px;top:418.50px;font-size:12.3px;color:#1c1f26;letter-spacing:0.116px;">Select venue</span>
<span class="t" style="left:1093.70px;top:450.50px;font-size:12.3px;color:#1c1f26;letter-spacing:0.169px;">Vendor</span>
<span class="t" style="left:1233.80px;top:514.50px;font-size:12.3px;color:#1c1f26;letter-spacing:-0.017px;">Banner ad</span>
<span class="t" style="left:1265.50px;top:546.50px;font-size:12.3px;color:#1c1f26;letter-spacing:0.153px;">Infographic -  Sales Event</span>
<svg style="position:absolute;left:1151px;top:581.6px;" width="10" height="11" viewBox="0 0 10 11" fill="none"><rect x="0.6" y="1.6" width="8.8" height="8.6" rx="1" stroke="#6b6b6b" stroke-width="1.1"/><path d="M0.6 3.4 H9.4" stroke="#6b6b6b" stroke-width="1.6"/><path d="M2.6 0.4 V2 M7.4 0.4 V2" stroke="#6b6b6b" stroke-width="1.1"/></svg>
<span class="t" style="left:1166.60px;top:578.50px;font-size:12.3px;color:#6b6b6b;letter-spacing:0.131px;">Proofing example</span>
<span class="t" style="left:1727.50px;top:642.50px;font-size:12.3px;color:#1c1f26;letter-spacing:0.006px;background:#fff;line-height:14px;height:14px;margin-top:3px;">Event Date</span>
<span class="t" style="left:1804.90px;top:706.50px;font-size:12.3px;color:#1c1f26;letter-spacing:0.242px;">Collect feedback</span>
<div style="position:absolute;left:1756px;top:174px;width:78px;height:24px;background:rgba(236,240,246,.86);border-radius:5px;"></div>
<div style="position:absolute;left:1838px;top:174px;width:24px;height:24px;background:rgba(236,240,246,.86);border-radius:5px;"></div>
<div style="position:absolute;left:1866px;top:174px;width:24px;height:24px;background:rgba(236,240,246,.86);border-radius:5px;"></div>
<span class="t" style="left:1763.80px;top:175.80px;font-size:13px;color:#1b2236;letter-spacing:-0.107px;">Months</span>
<svg style="position:absolute;left:1814px;top:183px;" width="9" height="6" viewBox="0 0 9 6" fill="none"><path d="M0.9 0.9 L4.5 4.5 L8.1 0.9" stroke="#1b2236" stroke-width="1.4" stroke-linecap="round" stroke-linejoin="round"/></svg>
<svg style="position:absolute;left:1844px;top:180px;" width="12" height="12" viewBox="0 0 12 12" fill="none"><path d="M0.6 6 H11.4" stroke="#1b2236" stroke-width="1.5" stroke-linecap="round"/></svg>
<svg style="position:absolute;left:1872px;top:180px;" width="12" height="12" viewBox="0 0 12 12" fill="none"><path d="M0.6 6 H11.4 M6 0.6 V11.4" stroke="#1b2236" stroke-width="1.5" stroke-linecap="round"/></svg>
</div>
<div style="position:absolute;left:879px;top:126px;width:12px;height:811px;background:linear-gradient(90deg,rgba(20,30,60,.085),rgba(20,30,60,0));"></div>
<div style="position:absolute;left:879px;top:534px;width:12px;height:32px;background:#818eaa;border-radius:0 5px 5px 0;"></div>
<svg style="position:absolute;left:881.8px;top:546px;" width="5" height="8" viewBox="0 0 5 8" fill="none"><path d="M4 0.8 L1 4 L4 7.2" stroke="#fff" stroke-width="1" stroke-linecap="round" stroke-linejoin="round"/></svg>
<div style="position:absolute;left:1905px;top:126px;width:1px;height:811px;background:#e6e7ec"></div><div style="position:absolute;left:0px;top:0px;width:1908px;height:2px;background:rgba(185,185,190,.55)"></div><div style="position:absolute;left:0px;top:934px;width:1908px;height:2px;background:rgba(185,185,190,.55)"></div><div style="position:absolute;left:1px;top:2px;width:2px;height:932px;background:rgba(185,185,190,.55)"></div><div style="position:absolute;left:1906px;top:2px;width:1px;height:932px;background:rgba(185,185,190,.12)"></div><div style="position:absolute;left:1907px;top:2px;width:1px;height:932px;background:rgba(185,185,190,.6)"></div><div style="position:absolute;left:0px;top:0px;width:1px;height:937px;background:rgba(10,14,40,.6)"></div><div style="position:absolute;left:0px;top:936px;width:290px;height:1px;background:rgba(10,14,40,.6)"></div>
</div>
</body></html>
